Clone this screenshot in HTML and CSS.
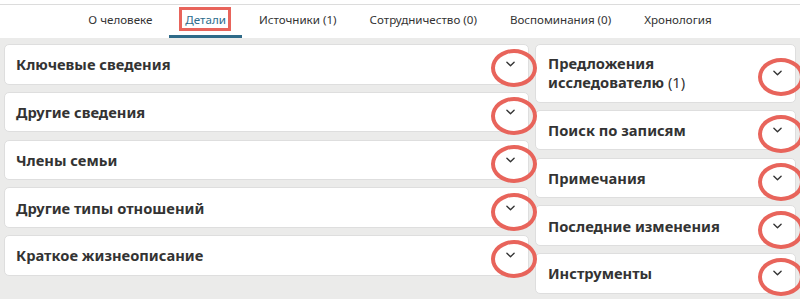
FILE: index.html
```html
<!DOCTYPE html>
<html lang="ru">
<head>
<meta charset="utf-8">
<title>Детали</title>
<link rel="stylesheet" href="styles.css">
</head>
<body>
<header class="tabbar">
  <nav class="tabs">
    <a class="tab">О человеке</a>
    <a class="tab active"><span class="mark">Детали</span></a>
    <a class="tab">Источники (1)</a>
    <a class="tab">Сотрудничество (0)</a>
    <a class="tab">Воспоминания (0)</a>
    <a class="tab">Хронология</a>
  </nav>
</header>
<main class="content">
  <section class="col col-left">
    <div class="card"><span class="title">Ключевые сведения</span><span class="toggle"><svg viewBox="0 0 10 6" width="9" height="6"><path d="M1 1 L5 5 L9 1" fill="none" stroke="#333" stroke-width="1.5" stroke-linecap="round" stroke-linejoin="round"/></svg></span></div>
    <div class="card"><span class="title">Другие сведения</span><span class="toggle"><svg viewBox="0 0 10 6" width="9" height="6"><path d="M1 1 L5 5 L9 1" fill="none" stroke="#333" stroke-width="1.5" stroke-linecap="round" stroke-linejoin="round"/></svg></span></div>
    <div class="card"><span class="title">Члены семьи</span><span class="toggle"><svg viewBox="0 0 10 6" width="9" height="6"><path d="M1 1 L5 5 L9 1" fill="none" stroke="#333" stroke-width="1.5" stroke-linecap="round" stroke-linejoin="round"/></svg></span></div>
    <div class="card"><span class="title">Другие типы отношений</span><span class="toggle"><svg viewBox="0 0 10 6" width="9" height="6"><path d="M1 1 L5 5 L9 1" fill="none" stroke="#333" stroke-width="1.5" stroke-linecap="round" stroke-linejoin="round"/></svg></span></div>
    <div class="card"><span class="title">Краткое жизнеописание</span><span class="toggle"><svg viewBox="0 0 10 6" width="9" height="6"><path d="M1 1 L5 5 L9 1" fill="none" stroke="#333" stroke-width="1.5" stroke-linecap="round" stroke-linejoin="round"/></svg></span></div>
  </section>
  <section class="col col-right">
    <div class="card card-tall"><span class="title">Предложения<br>исследователю <span class="count">(1)</span></span><span class="toggle"><svg viewBox="0 0 10 6" width="9" height="6"><path d="M1 1 L5 5 L9 1" fill="none" stroke="#333" stroke-width="1.5" stroke-linecap="round" stroke-linejoin="round"/></svg></span></div>
    <div class="card"><span class="title">Поиск по записям</span><span class="toggle"><svg viewBox="0 0 10 6" width="9" height="6"><path d="M1 1 L5 5 L9 1" fill="none" stroke="#333" stroke-width="1.5" stroke-linecap="round" stroke-linejoin="round"/></svg></span></div>
    <div class="card"><span class="title">Примечания</span><span class="toggle"><svg viewBox="0 0 10 6" width="9" height="6"><path d="M1 1 L5 5 L9 1" fill="none" stroke="#333" stroke-width="1.5" stroke-linecap="round" stroke-linejoin="round"/></svg></span></div>
    <div class="card"><span class="title">Последние изменения</span><span class="toggle"><svg viewBox="0 0 10 6" width="9" height="6"><path d="M1 1 L5 5 L9 1" fill="none" stroke="#333" stroke-width="1.5" stroke-linecap="round" stroke-linejoin="round"/></svg></span></div>
    <div class="card"><span class="title">Инструменты</span><span class="toggle"><svg viewBox="0 0 10 6" width="9" height="6"><path d="M1 1 L5 5 L9 1" fill="none" stroke="#333" stroke-width="1.5" stroke-linecap="round" stroke-linejoin="round"/></svg></span></div>
  </section>
</main>
</body>
</html>
```

FILE: styles.css
```css
* { box-sizing: border-box; }
html, body {
  margin: 0;
  padding: 0;
  background: #ebebea;
  font-family: "Noto Sans", "Open Sans", sans-serif;
  color: #333;
  height: 299px;
  overflow: hidden;
}
.tabbar {
  background: #fff;
  height: 38px;
  padding-top: 4px;
}
.tabs {
  border-top: 1px solid #dcdcdc;
  height: 34px;
  display: flex;
  justify-content: center;
}
.tab {
  display: flex;
  align-items: center;
  padding: 0 16.5px 2px;
  font-size: 11.6px;
  color: #333;
  height: 100%;
  border-bottom: 3px solid transparent;
  white-space: nowrap;
}
.tab.active {
  color: #2d6c8c;
  border-bottom-color: #2f6a88;
}
.mark {
  position: relative;
}
.mark::after {
  content: "";
  position: absolute;
  left: -6px;
  right: -5px;
  top: -5px;
  bottom: -4px;
  border: 3px solid #e8645b;
}
.content {
  display: flex;
  gap: 6px;
  padding: 6px 4px 0;
  align-items: flex-start;
}
.col {
  display: flex;
  flex-direction: column;
  gap: 7.25px;
}
.col-left { width: 525px; }
.col-right { width: 261px; }
.card {
  background: #fff;
  border: 1px solid #dedede;
  border-radius: 5px;
  display: flex;
  align-items: center;
  justify-content: space-between;
  padding: 9.25px 9px 9.25px 11px;
}
.col-right .card { padding-left: 12px; }
.card-tall .title { line-height: 19px; }
.title {
  font-size: 14.7px;
  font-weight: 700;
  line-height: 20px;
  color: #333;
}
.count { font-weight: 400; }
.toggle {
  position: relative;
  width: 18px;
  height: 18px;
  display: flex;
  align-items: center;
  justify-content: center;
}
.toggle::after {
  content: "";
  position: absolute;
  left: 50%;
  top: 50%;
  width: 38px;
  height: 30px;
  margin-left: -19px;
  margin-top: -15px;
  border: 4px solid #e8645b;
  border-radius: 50%;
}
```
